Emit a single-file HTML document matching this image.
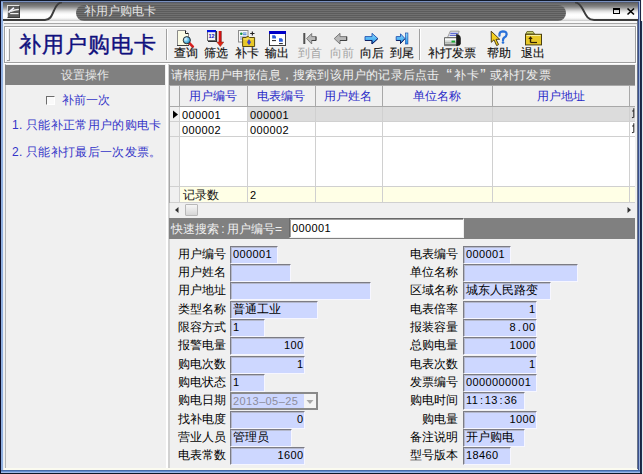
<!DOCTYPE html>
<html><head><meta charset="utf-8">
<style>
*{box-sizing:border-box;margin:0;padding:0}
html,body{width:643px;height:474px;overflow:hidden;background:#ffffff}
body{position:relative;font-family:"Liberation Sans",sans-serif;font-size:12px;color:#000}
.a{position:absolute}
.t{position:absolute;white-space:nowrap;line-height:12px;font-size:12px}
.mc{display:inline-block;width:6.5px;text-align:center;letter-spacing:0}
.lbl{position:absolute;white-space:nowrap;line-height:12px;font-size:12px;color:#000}
.f{position:absolute;height:18px;background:#cdd7ff;border-top:1px solid #7c7c84;border-left:1px solid #7c7c84;border-right:1px solid #f6f6ff;border-bottom:1px solid #f6f6ff;box-shadow:inset 1px 1px 0 #b4b8cc}
.fv{position:absolute;top:0.5px;white-space:nowrap;line-height:12px;font-size:12px;color:#000}
.fv.r{right:0.5px}
.fv.l{left:2px}
.tb{position:absolute;top:47px;line-height:12px;font-size:12px;color:#101010;white-space:nowrap;-webkit-text-stroke:0.15px #101010}
.tb.dis{color:#a4a4a4;-webkit-text-stroke:0}
.gl{position:absolute;background:#d0d0d0}
.d{font-family:"Liberation Sans",sans-serif;font-size:11px;letter-spacing:0.4px}
.hd{position:absolute;white-space:nowrap;line-height:12px;font-size:12px;color:#2a2ac8;top:90px}
</style></head><body>
<div class="a" style="left:0px;top:0px;width:642px;height:474px;background:#f0f0f0;"></div>
<div class="a" style="left:3px;top:2px;width:635px;height:19px;background:linear-gradient(to bottom,#464e66 0px,#666 1px,#747474 3px,#8c8c8c 5px,#b4b4b4 7px,#dcdcdc 9px,#f4f4f4 11px,#ffffff 13px,#fafafa 16px,#e4e4e4 17.5px,#c4c4c4 19px)"></div>
<svg class="a" style="left:0;top:0" width="643" height="26">
 <path d="M3 20 H45 C50.5 20 52 15 54 10.5 C56 5.5 58 2.5 62 2.2" stroke="#3c3c3c" stroke-width="2" fill="none"/>
 <path d="M575 2.2 C579 2.5 581 5.5 583.5 10.5 C586 15.5 588 20 594 20 H638" stroke="#3c3c3c" stroke-width="2" fill="none"/>
</svg>
<div class="a" style="left:76px;top:5px;width:490px;height:16px;border-radius:8px;background:repeating-linear-gradient(to bottom,#5c5c5c 0px,#5c5c5c 1px,#707070 1px,#707070 2px)"></div>
<div class="t" style="left:84px;top:5px;color:#e4e4e4">补用户购电卡</div>
<div class="a" style="left:7px;top:5px;width:13px;height:13px;background:#5c5c5c;border-top:1px solid #e4e4e4;border-left:1px solid #d8d8d8;border-right:1px solid #3a3a3a;border-bottom:1px solid #3a3a3a"></div>
<svg class="a" style="left:7px;top:5px" width="13" height="13"><path d="M2 7 L6.5 3.2" stroke="#f4f4ff" stroke-width="1.7" stroke-linecap="round" fill="none"/><path d="M4.5 6.2 Q8 4.6 11.3 4.5" stroke="#eeeeee" stroke-width="1.4" stroke-linecap="round" fill="none"/><path d="M3.2 8.6 H11.5" stroke="#f0f0f0" stroke-width="1.2" fill="none"/></svg>
<div class="a" style="left:613px;top:8px;width:7px;height:6px;border:1px solid #000;border-top-width:2px"></div>
<svg class="a" style="left:626px;top:7px" width="10" height="9"><path d="M1.5 1.5 L8 7.5 M8 1.5 L1.5 7.5" stroke="#000" stroke-width="1.6"/></svg>
<div class="a" style="left:3px;top:21px;width:635px;height:2px;background:#f8f8f8;"></div>
<div class="a" style="left:3px;top:23px;width:635px;height:1px;background:#a8a8a8;"></div>
<div class="a" style="left:3px;top:24px;width:635px;height:1px;background:#ececec;"></div>
<div class="a" style="left:4px;top:26px;width:632px;height:1px;background:#a0a0a0;"></div>
<div class="a" style="left:5px;top:27px;width:630px;height:1px;background:#ffffff;"></div>
<div class="a" style="left:4px;top:26px;width:1px;height:37px;background:#a0a0a0;"></div>
<div class="a" style="left:5px;top:27px;width:1px;height:35px;background:#ffffff;"></div>
<div class="a" style="left:4px;top:62px;width:632px;height:1px;background:#a0a0a0;"></div>
<div class="a" style="left:4px;top:63px;width:633px;height:1px;background:#ffffff;"></div>
<div class="a" style="left:635px;top:26px;width:1px;height:37px;background:#a0a0a0;"></div>
<div class="a" style="left:636px;top:26px;width:1px;height:38px;background:#ffffff;"></div>
<div class="a" style="left:7px;top:29px;width:1px;height:31px;background:#ffffff;"></div>
<div class="a" style="left:9px;top:29px;width:1px;height:32px;background:#a0a0a0;"></div>
<div class="a" style="left:7px;top:60px;width:3px;height:1px;background:#a0a0a0;"></div>
<div class="a" style="left:166px;top:29px;width:1px;height:31px;background:#a0a0a0;"></div>
<div class="a" style="left:167px;top:29px;width:1px;height:31px;background:#ffffff;"></div>
<div class="a" style="left:419px;top:29px;width:1px;height:31px;background:#a0a0a0;"></div>
<div class="a" style="left:420px;top:29px;width:1px;height:31px;background:#ffffff;"></div>
<div class="a" style="left:19px;top:32px;font-size:21.5px;line-height:26px;color:#10107e;white-space:nowrap;-webkit-text-stroke:0.4px #10107e;letter-spacing:1.1px">补用户购电卡</div>
<!-- TOOLBAR ICONS -->
<svg class="a" style="left:174px;top:28px" width="22" height="20">
 <defs><radialGradient id="lg" cx="0.35" cy="0.35" r="0.7"><stop offset="0" stop-color="#e8f8ff"/><stop offset="0.5" stop-color="#70c8f0"/><stop offset="1" stop-color="#2080b0"/></radialGradient></defs>
 <path d="M3.5 2.5 H11.5 L14.5 5.5 V17.5 H3.5 Z" fill="#fbfbe4" stroke="#8a8a8a" stroke-width="1"/>
 <path d="M3 17.5 H15" stroke="#404040" stroke-width="1"/>
 <path d="M11.5 2.5 V5.5 H14.5" fill="#fff" stroke="#202020" stroke-width="1"/>
 <path d="M15.2 15 L18.8 18.6" stroke="#d82020" stroke-width="2.6" stroke-linecap="round"/>
 <circle cx="12.8" cy="12.2" r="3.6" fill="url(#lg)" stroke="#303030" stroke-width="1"/>
</svg>
<svg class="a" style="left:204px;top:28px" width="24" height="20">
 <rect x="3.5" y="2.5" width="8" height="10" fill="#f4f4f4" stroke="#707070"/>
 <rect x="3" y="2" width="9" height="2.2" fill="#0010e0"/>
 <path d="M12.5 3 V13.5 H4" stroke="#303030" stroke-width="1.2" fill="none"/>
 <text x="7.6" y="10.3" font-family="Liberation Sans" font-size="5.5" font-weight="bold" fill="#1010c0" text-anchor="middle">12</text>
 <path d="M16 3 V14.5" stroke="#e01010" stroke-width="2.6"/>
 <path d="M17.3 3 V14" stroke="#602020" stroke-width="0.6"/>
 <path d="M12.8 14 H19.8 L16.3 18.6 Z" fill="#e82010" stroke="#803020" stroke-width="0.5"/>
</svg>
<svg class="a" style="left:235px;top:28px" width="24" height="20">
 <rect x="3.5" y="2.5" width="9.5" height="11.5" fill="#f8f8f8" stroke="#8c8c8c"/>
 <circle cx="6.3" cy="5.7" r="1.3" fill="#109040"/>
 <path d="M8 5 H11.5 M8 6.7 H11.5" stroke="#3070d0" stroke-width="0.9"/>
 <path d="M5 9 H11.5 M5 11 H11.5" stroke="#8090c0" stroke-width="1"/>
 <path d="M7.6 9.5 H11 L12 8.6 H13.5 L14.5 9.5 H19.6 V18.5 H7.6 Z" fill="#e8c828" stroke="#5a4a10" stroke-width="1"/>
 <path d="M8.5 11 H18.5" stroke="#f8e878" stroke-width="1"/>
 <path d="M14 11 L16 14.2 L14 17.3 L12 14.2 Z" fill="#4040c8"/>
 <path d="M15.2 5.5 H19.5 M17.35 3.5 V7.5" stroke="#202020" stroke-width="1.1"/>
</svg>
<svg class="a" style="left:265px;top:28px" width="24" height="20">
 <rect x="4.5" y="3.5" width="16" height="14" fill="#ffffff" stroke="#404040"/>
 <rect x="4" y="3" width="17" height="3" fill="#0000c8"/>
 <path d="M7.2 7.2 H9.8 L11 8.4 V10.6 H7.2 Z" fill="#2a5ad8"/>
 <path d="M7 12.6 H11" stroke="#202020" stroke-width="1"/>
 <path d="M14 10.3 H16.6 L17.8 11.5 V13.8 H14 Z" fill="#2a5ad8"/>
 <path d="M14 15.6 H17.8" stroke="#202020" stroke-width="1"/>
</svg>
<svg class="a" style="left:300px;top:30px" width="50" height="18">
 <path d="M4.3 3 V14" stroke="#505050" stroke-width="2"/>
 <path d="M6.6 8.6 L11.7 3.5 V6.6 H16 V10.5 H11.7 V14 Z" fill="#b8b8b8" stroke="#707070" stroke-width="0.9"/>
 <path d="M11.7 10.5 H16 V6.6" stroke="#404040" stroke-width="1" fill="none"/>
 <path d="M34.2 8.6 L40 3.3 V6.6 H46.7 V10.5 H40 V14 Z" fill="#b8b8b8" stroke="#707070" stroke-width="0.9"/>
 <path d="M40 10.5 H46.7 V6.6" stroke="#404040" stroke-width="1" fill="none"/>
</svg>
<svg class="a" style="left:360px;top:30px" width="50" height="18">
 <defs><linearGradient id="bg1" x1="0" y1="0" x2="0" y2="1"><stop offset="0" stop-color="#90e0ff"/><stop offset="1" stop-color="#2090e8"/></linearGradient></defs>
 <path d="M17.9 8.6 L12 3.3 V6.6 H5 V10.5 H12 V14 Z" fill="url(#bg1)" stroke="#2050b0" stroke-width="0.9"/>
 <path d="M5 10.5 H12 V14 L17.9 8.6" stroke="#102060" stroke-width="1" fill="none"/>
 <path d="M45 8.6 L40.5 3.8 V6.6 H36.2 V10.5 H40.5 V13.5 Z" fill="url(#bg1)" stroke="#2050b0" stroke-width="0.9"/>
 <path d="M36.2 10.5 H40.5 V13.5 L45 8.6" stroke="#102060" stroke-width="1" fill="none"/>
 <rect x="45.5" y="3" width="2.4" height="11" fill="url(#bg1)" stroke="#2050b0" stroke-width="0.7"/>
</svg>
<svg class="a" style="left:440px;top:28px" width="24" height="20">
 <path d="M7.5 9.5 L10.3 3.2 H19.2 L17 9.5 Z" fill="#f0f0f0" stroke="#8a8a8a" stroke-width="0.8"/>
 <path d="M10.3 5.3 H17.8 M9.6 7.3 H16.8" stroke="#3a4ac8" stroke-width="1"/>
 <path d="M4.5 9.6 H17.5 V17.6 H4.5 Z" fill="#d4d8d4" stroke="#606060" stroke-width="0.9"/>
 <path d="M5 11.5 H16.5" stroke="#f8f8f8" stroke-width="1.6"/>
 <path d="M5 14.8 H16.5" stroke="#a8aca8" stroke-width="1.2"/>
 <path d="M5 16.6 H16.5" stroke="#707070" stroke-width="1"/>
 <rect x="11.5" y="12.6" width="3.6" height="1.9" fill="#18a830"/>
 <path d="M16.2 6 Q20.8 6.5 20.8 10.5 V15.5 Q20.5 18 16.2 18 Z" fill="#1c1c1c"/>
</svg>
<svg class="a" style="left:488px;top:28px" width="24" height="20">
 <path d="M3.2 3.2 L3.3 14.3 L6 11.8 L8.6 17.6 L10.6 16.6 L8 11.3 L11.7 11.3 Z" fill="#f4d020" stroke="#403010" stroke-width="0.9" stroke-linejoin="round"/>
 <path d="M11.5 7.5 Q11 3.5 14.8 3.3 Q18.8 3.3 18.6 6.5 Q18.4 8.5 16.3 9.6 Q15 10.4 15 12.2" fill="none" stroke="#2a70d8" stroke-width="2.3" stroke-linecap="round"/>
 <circle cx="15" cy="14.5" r="1.3" fill="#2a70d8"/>
</svg>
<svg class="a" style="left:521px;top:28px" width="24" height="20">
 <path d="M4.8 6 L6 3.5 H12 L13.5 6 Z" fill="#c8d070" stroke="#606020" stroke-width="0.8"/>
 <rect x="4.5" y="6.3" width="16" height="10.6" fill="#e8c828" stroke="#4a4010" stroke-width="1"/>
 <path d="M5.5 7.5 H19.5" stroke="#f8f0a0" stroke-width="1"/>
 <path d="M9.5 14.5 V10" stroke="#302000" stroke-width="1.4"/>
 <path d="M7.3 11 L9.5 8.3 L11.7 11 Z" fill="#302000"/>
 <path d="M9.5 14.5 H16" stroke="#302000" stroke-width="1.2"/>
</svg>


<div class="tb" style="left:174px">查询</div>
<div class="tb" style="left:204px">筛选</div>
<div class="tb" style="left:235px">补卡</div>
<div class="tb" style="left:265px">输出</div>
<div class="tb dis" style="left:298px">到首</div>
<div class="tb dis" style="left:330px">向前</div>
<div class="tb" style="left:360px">向后</div>
<div class="tb" style="left:390px">到尾</div>
<div class="tb" style="left:428px">补打发票</div>
<div class="tb" style="left:487px">帮助</div>
<div class="tb" style="left:521px">退出</div>
<div class="a" style="left:0px;top:0px;width:1px;height:474px;background:#0c0c28;"></div>
<div class="a" style="left:1px;top:1px;width:2px;height:472px;background:#90b0e0;"></div>
<div class="a" style="left:3px;top:21px;width:1px;height:448px;background:#e8eef5;"></div>
<div class="a" style="left:0px;top:0px;width:641px;height:1px;background:#101828;"></div>
<div class="a" style="left:1px;top:1px;width:639px;height:1px;background:#7890c0;"></div>
<div class="a" style="left:637px;top:21px;width:1px;height:448px;background:#687488;"></div>
<div class="a" style="left:638px;top:2px;width:1px;height:471px;background:#3a5090;"></div>
<div class="a" style="left:639px;top:1px;width:1px;height:472px;background:#98b0d8;"></div>
<div class="a" style="left:640px;top:0px;width:1px;height:474px;background:#1a2440;"></div>
<div class="a" style="left:641px;top:21px;width:1px;height:453px;background:#203050;"></div>
<div class="a" style="left:642px;top:21px;width:1px;height:453px;background:#e0e8f0;"></div>
<div class="a" style="left:4px;top:468px;width:633px;height:2px;background:#fbfbf0;"></div>
<div class="a" style="left:1px;top:470px;width:639px;height:1px;background:#4a6aa8;"></div>
<div class="a" style="left:1px;top:471px;width:639px;height:1px;background:#6890d0;"></div>
<div class="a" style="left:1px;top:472px;width:639px;height:1px;background:#a0b8e8;"></div>
<div class="a" style="left:0px;top:473px;width:642px;height:1px;background:#101828;"></div>
<div class="a" style="left:5px;top:64px;width:1px;height:404px;background:#b4b4b4;"></div>
<div class="a" style="left:5px;top:65px;width:160px;height:20px;background:#808080;"></div>
<div class="t" style="left:61px;top:69px;color:#e8e8e8">设置操作</div>
<div class="a" style="left:46px;top:96px;width:9px;height:9px;background:#fafafa;border-top:1px solid #6c6c6c;border-left:1px solid #6c6c6c;border-right:1px solid #ffffff;border-bottom:1px solid #ffffff"></div>
<div class="t" style="left:62px;top:94px;color:#3434c8">补前一次</div>
<div class="t" style="left:12px;top:119px;color:#3434c8;letter-spacing:0.35px"><span class="d" style="display:inline-block;width:14px;font-size:12px">1.</span>只能补正常用户的购电卡</div>
<div class="t" style="left:12px;top:146px;color:#3434c8;letter-spacing:0.35px"><span class="d" style="display:inline-block;width:14px;font-size:12px">2.</span>只能补打最后一次发票。</div>
<div class="a" style="left:166px;top:64px;width:2px;height:404px;background:#ffffff;"></div>
<div class="a" style="left:168px;top:64px;width:2px;height:404px;background:#d2d2d2;"></div>
<div class="a" style="left:169px;top:65px;width:466px;height:20px;background:#808080;"></div>
<div class="t" style="left:171px;top:69px;color:#f0f0f0;letter-spacing:0.2px">请根据用户申报信息，搜索到该用户的记录后点击<span style="display:inline-block;width:15px;text-align:right;padding-right:2.5px;font-size:16px;vertical-align:-1.5px;letter-spacing:0">“</span>补卡<span style="display:inline-block;width:11px;text-align:left;padding-left:1.5px;font-size:16px;vertical-align:-1.5px;letter-spacing:0">”</span>或补打发票</div>
<div class="a" style="left:169px;top:85px;width:466px;height:118px;background:#fff;border-left:1px solid #a8a8a8;border-top:1px solid #a8a8a8"></div>
<div class="a" style="left:170px;top:86px;width:465px;height:20px;background:#f0f0f0;"></div>
<div class="a" style="left:170px;top:86px;width:9px;height:116px;background:#f0f0f0;"></div>
<div class="a" style="left:180px;top:107px;width:455px;height:14px;background:#dcdcdc;"></div>
<div class="a" style="left:180px;top:107px;width:67px;height:14px;background:#ffffff;"></div>
<div class="a" style="left:180px;top:187px;width:455px;height:15px;background:#ffffe6;"></div>
<div class="gl" style="left:179px;top:86px;width:1px;height:116px"></div>
<div class="gl" style="left:179px;top:86px;width:1px;height:20px;background:#a8a8a8"></div>
<div class="gl" style="left:247px;top:86px;width:1px;height:116px"></div>
<div class="gl" style="left:247px;top:86px;width:1px;height:20px;background:#a8a8a8"></div>
<div class="gl" style="left:315px;top:86px;width:1px;height:116px"></div>
<div class="gl" style="left:315px;top:86px;width:1px;height:20px;background:#a8a8a8"></div>
<div class="gl" style="left:382px;top:86px;width:1px;height:116px"></div>
<div class="gl" style="left:382px;top:86px;width:1px;height:20px;background:#a8a8a8"></div>
<div class="gl" style="left:492px;top:86px;width:1px;height:116px"></div>
<div class="gl" style="left:492px;top:86px;width:1px;height:20px;background:#a8a8a8"></div>
<div class="gl" style="left:629px;top:86px;width:1px;height:116px"></div>
<div class="gl" style="left:629px;top:86px;width:1px;height:20px;background:#a8a8a8"></div>
<div class="gl" style="left:170px;top:121px;width:465px;height:1px"></div>
<div class="gl" style="left:170px;top:136px;width:465px;height:1px"></div>
<div class="gl" style="left:170px;top:186px;width:465px;height:1px"></div>
<div class="gl" style="left:170px;top:202px;width:465px;height:1px"></div>
<div class="gl" style="left:170px;top:106px;width:465px;height:1px;background:#a8a8a8"></div>
<div class="hd" style="left:189px">用户编号</div>
<div class="hd" style="left:257px">电表编号</div>
<div class="hd" style="left:324px">用户姓名</div>
<div class="hd" style="left:413px">单位名称</div>
<div class="hd" style="left:537px">用户地址</div>
<svg class="a" style="left:172px;top:110px" width="7" height="9"><path d="M1 0.5 L6 4.5 L1 8.5 Z" fill="#000"/></svg>
<div class="t d" style="left:182px;top:109px">000001</div>
<div class="t d" style="left:250px;top:109px">000001</div>
<div class="t d" style="left:182px;top:124px">000002</div>
<div class="t d" style="left:250px;top:124px">000002</div>
<svg class="a" style="left:631px;top:107px" width="4" height="30"><path d="M2.8 1.2 V10.2 L1 10.8 M1.2 4.2 L2.8 3.6 M2.8 16.2 V25.2 L1 25.8 M1.2 19.2 L2.8 18.6" stroke="#303030" stroke-width="1.1" fill="none"/></svg>
<div class="t" style="left:183px;top:189px;color:#101010">记录数</div>
<div class="t d" style="left:250px;top:189px">2</div>
<div class="a" style="left:170px;top:203px;width:465px;height:14px;background:#f0f0f0;"></div>
<svg class="a" style="left:175px;top:207px" width="4" height="6"><path d="M3.5 0 L0 3 L3.5 6 Z" fill="#303030"/></svg>
<div class="a" style="left:185px;top:204px;width:13px;height:12px;background:linear-gradient(#f6f6f6,#d6d6d6);border:1px solid #b8b8b8;border-radius:1px"></div>
<svg class="a" style="left:627px;top:207px" width="4" height="6"><path d="M0.5 0 L4 3 L0.5 6 Z" fill="#303030"/></svg>
<div class="a" style="left:169px;top:218px;width:466px;height:21px;background:#808080;"></div>
<div class="t" style="left:171px;top:223px;color:#f0f0f0">快速搜索<span style="display:inline-block;width:8px;text-align:center">:</span>用户编号=</div>
<div class="a" style="left:289px;top:218px;width:175px;height:20px;background:#fff;border-top:1px solid #686868;border-left:1px solid #686868;border-right:1px solid #f0f0f0;border-bottom:1px solid #f0f0f0;box-shadow:inset 1px 1px 0 #a0a0a0"></div>
<div class="t d" style="left:292px;top:222px">000001</div>
<div class="lbl" style="left:178px;top:248px">用户编号</div>
<div class="f" style="left:230px;top:246px;width:48px"><div class="fv l d">000001</div></div>
<div class="lbl" style="left:178px;top:266px">用户姓名</div>
<div class="f" style="left:230px;top:264px;width:61px"></div>
<div class="lbl" style="left:178px;top:284px">用户地址</div>
<div class="f" style="left:230px;top:282px;width:141px"></div>
<div class="lbl" style="left:178px;top:303px">类型名称</div>
<div class="f" style="left:230px;top:301px;width:88px"><div class="fv l">普通工业</div></div>
<div class="lbl" style="left:178px;top:321px">限容方式</div>
<div class="f" style="left:230px;top:319px;width:35px"><div class="fv l d">1</div></div>
<div class="lbl" style="left:178px;top:339px">报警电量</div>
<div class="f" style="left:230px;top:337px;width:75px"><div class="fv r d">100</div></div>
<div class="lbl" style="left:178px;top:358px">购电次数</div>
<div class="f" style="left:230px;top:356px;width:75px"><div class="fv r d">1</div></div>
<div class="lbl" style="left:178px;top:376px">购电状态</div>
<div class="f" style="left:230px;top:374px;width:35px"><div class="fv l d">1</div></div>
<div class="lbl" style="left:178px;top:394px">购电日期</div>
<div class="a" style="left:230px;top:392px;width:87.5px;height:17.5px;background:#cdd7ff;border:2px solid #8a8a8a;border-left:1px solid #7a7a7a;box-shadow:inset 1px 0 0 #a8a8b8"></div>
<div class="t d" style="left:233px;top:395px;color:#8c8c9c">2013<span class="mc">–</span>05<span class="mc">–</span>25</div>
<div class="a" style="left:303.5px;top:394px;width:12px;height:13.5px;background:#f4f4f4;"></div>
<svg class="a" style="left:306px;top:399.5px" width="8" height="5"><path d="M0.5 0 H7.5 L4 4 Z" fill="#a8a8a8"/></svg>
<div class="lbl" style="left:178px;top:413px">找补电度</div>
<div class="f" style="left:230px;top:411px;width:75px"><div class="fv r d">0</div></div>
<div class="lbl" style="left:178px;top:431px">营业人员</div>
<div class="f" style="left:230px;top:429px;width:62px"><div class="fv l">管理员</div></div>
<div class="lbl" style="left:178px;top:449px">电表常数</div>
<div class="f" style="left:230px;top:447px;width:75px"><div class="fv r d">1600</div></div>
<div class="lbl" style="left:410px;top:248px">电表编号</div>
<div class="f" style="left:463px;top:246px;width:48px"><div class="fv l d">000001</div></div>
<div class="lbl" style="left:410px;top:266px">单位名称</div>
<div class="f" style="left:463px;top:264px;width:115px"></div>
<div class="lbl" style="left:410px;top:284px">区域名称</div>
<div class="f" style="left:463px;top:282px;width:88px"><div class="fv l">城东人民路变</div></div>
<div class="lbl" style="left:410px;top:303px">电表倍率</div>
<div class="f" style="left:463px;top:301px;width:74px"><div class="fv r d">1</div></div>
<div class="lbl" style="left:410px;top:321px">报装容量</div>
<div class="f" style="left:463px;top:319px;width:74px"><div class="fv r d">8<span class="mc">.</span>00</div></div>
<div class="lbl" style="left:410px;top:339px">总购电量</div>
<div class="f" style="left:463px;top:337px;width:74px"><div class="fv r d">1000</div></div>
<div class="lbl" style="left:410px;top:358px">电表次数</div>
<div class="f" style="left:463px;top:356px;width:74px"><div class="fv r d">1</div></div>
<div class="lbl" style="left:410px;top:376px">发票编号</div>
<div class="f" style="left:463px;top:374px;width:74px"><div class="fv l d">0000000001</div></div>
<div class="lbl" style="left:410px;top:394px">购电时间</div>
<div class="f" style="left:463px;top:392px;width:62px"><div class="fv l d">11<span class="mc">:</span>13<span class="mc">:</span>36</div></div>
<div class="lbl" style="left:422px;top:413px">购电量</div>
<div class="f" style="left:463px;top:411px;width:74px"><div class="fv r d">1000</div></div>
<div class="lbl" style="left:410px;top:431px">备注说明</div>
<div class="f" style="left:463px;top:429px;width:62px"><div class="fv l">开户购电</div></div>
<div class="lbl" style="left:410px;top:449px">型号版本</div>
<div class="f" style="left:463px;top:447px;width:48px"><div class="fv l d">18460</div></div>
</body></html>
